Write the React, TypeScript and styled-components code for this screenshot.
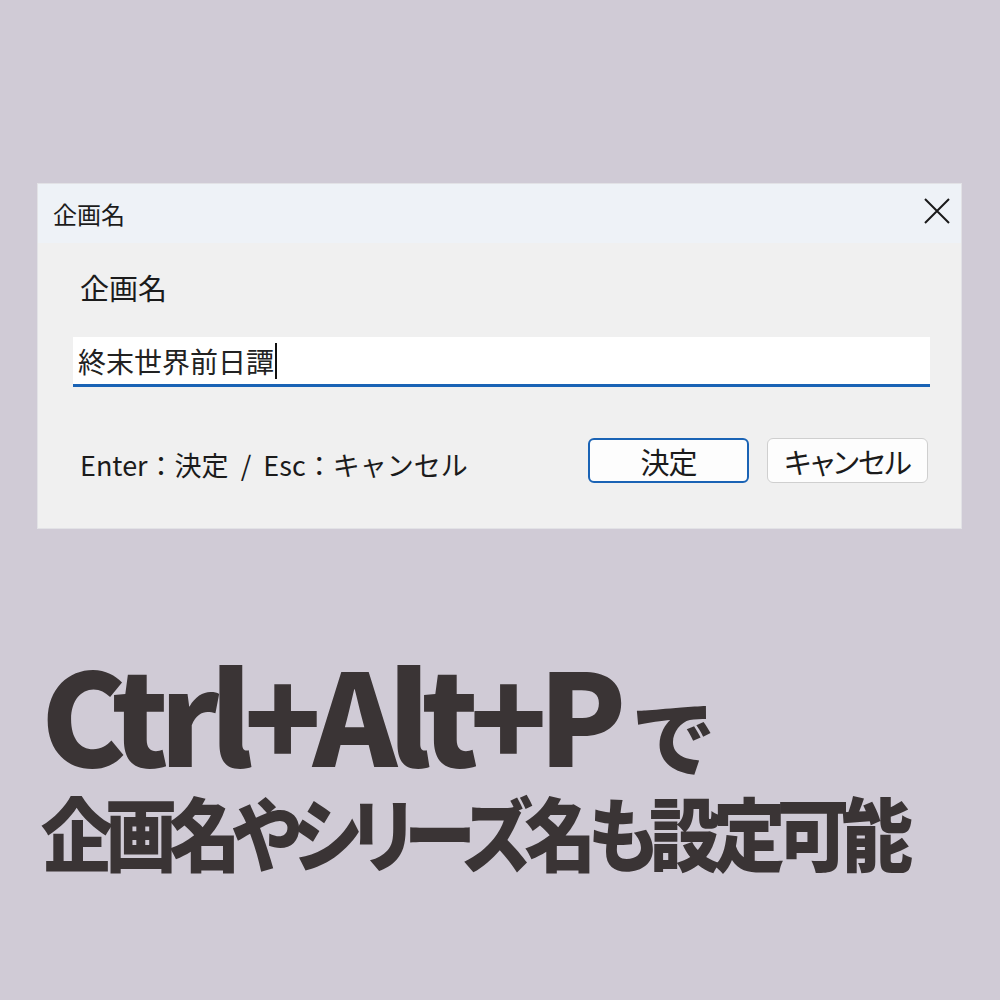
import styled, { createGlobalStyle } from 'styled-components'

const colors = {
  page: '#d0cbd6',
  ink: '#3a3435',
  titleBar: '#eef2f7',
  body: '#f0f0f0',
  accent: '#1a63b5',
  text: '#1b1b1b',
}

const GlobalStyle = createGlobalStyle`
  html, body {
    margin: 0;
    padding: 0;
    background: ${colors.page};
  }
  body {
    font-family: 'Noto Sans CJK JP', 'Noto Sans', sans-serif;
  }
`

const Page = styled.div`
  width: 1000px;
  height: 1000px;
  box-sizing: border-box;
  padding: 183px 0 0 37px;
  background: ${colors.page};
`

const Dialog = styled.div`
  width: 925px;
  height: 346px;
  box-sizing: border-box;
  display: flex;
  flex-direction: column;
  background: ${colors.body};
  border: 1px solid #e2e2e6;
`

const TitleBar = styled.div`
  height: 59px;
  display: flex;
  align-items: center;
  justify-content: space-between;
  padding: 0 11px 0 15px;
  background: ${colors.titleBar};
`

const TitleText = styled.span`
  font-size: 24px;
  color: ${colors.text};
`

const CloseSvg = styled.svg`
  margin-bottom: 5px;
`

const CloseIcon = () => (
  <CloseSvg width="26" height="26" viewBox="0 0 26 26">
    <path d="M1 1 L25 25 M25 1 L1 25" stroke="#1a1a1a" strokeWidth="2" fill="none" />
  </CloseSvg>
)

const Content = styled.div`
  flex: 1;
  display: flex;
  flex-direction: column;
  padding: 24px 31px 0 35px;
`

const FieldLabel = styled.div`
  font-size: 29px;
  line-height: 40px;
  color: ${colors.text};
  padding-left: 7px;
`

const TextBox = styled.div`
  margin-top: 30px;
  height: 47px;
  display: flex;
  align-items: center;
  padding-left: 5px;
  background: #ffffff;
  border-bottom: 3px solid ${colors.accent};
  font-size: 28px;
  color: #222;
`

const Caret = styled.span`
  display: inline-block;
  width: 2px;
  height: 36px;
  margin-left: 1px;
  background: #111;
`

const Footer = styled.div`
  margin-top: 50px;
  display: flex;
  align-items: center;
  justify-content: space-between;
  padding-left: 7px;
`

const Hint = styled.span`
  font-size: 27px;
  color: ${colors.text};
  white-space: pre;
  padding-top: 8px;
`

const Buttons = styled.div`
  display: flex;
  gap: 18px;
  padding-right: 2px;
`

const Button = styled.div<{ primary?: boolean }>`
  width: 161px;
  height: 45px;
  box-sizing: border-box;
  display: flex;
  align-items: center;
  justify-content: center;
  border-radius: 6px;
  font-size: 29px;
  font-feature-settings: 'palt';
  letter-spacing: -1px;
  color: #1b1b1b;
  background: #fdfdfd;
  border: ${(p) => (p.primary ? `2px solid ${colors.accent}` : '1px solid #cfcfcf')};
`

const Headline = styled.div`
  margin-top: 123px;
  padding-left: 4px;
  color: ${colors.ink};
`

const BigLine = styled.div`
  display: flex;
  align-items: baseline;
  height: 120px;
`

const Keys = styled.span`
  font-family: 'Noto Sans CJK JP', sans-serif;
  font-size: 128px;
  font-weight: 900;
  letter-spacing: -9px;
  line-height: 120px;
`

const De = styled.span`
  font-family: 'Noto Sans CJK JP', sans-serif;
  font-size: 84px;
  font-weight: 900;
  line-height: 120px;
  margin-left: 14px;
  position: relative;
  top: 3px;
`

const SubLine = styled.div`
  margin-top: 13px;
  font-family: 'Noto Sans CJK JP', sans-serif;
  font-size: 80px;
  font-weight: 900;
  letter-spacing: -9px;
  line-height: 90px;
  white-space: nowrap;
  font-feature-settings: 'palt';
  transform: scaleX(0.9);
  transform-origin: left center;
`

export default function App() {
  return (
    <>
      <GlobalStyle />
      <Page>
        <Dialog>
          <TitleBar>
            <TitleText>企画名</TitleText>
            <CloseIcon />
          </TitleBar>
          <Content>
            <FieldLabel>企画名</FieldLabel>
            <TextBox>
              終末世界前日譚
              <Caret />
            </TextBox>
            <Footer>
              <Hint>Enter：決定  /  Esc：キャンセル</Hint>
              <Buttons>
                <Button primary>決定</Button>
                <Button>キャンセル</Button>
              </Buttons>
            </Footer>
          </Content>
        </Dialog>
        <Headline>
          <BigLine>
            <Keys>Ctrl+Alt+P</Keys>
            <De>で</De>
          </BigLine>
          <SubLine>企画名やシリーズ名も設定可能</SubLine>
        </Headline>
      </Page>
    </>
  )
}
